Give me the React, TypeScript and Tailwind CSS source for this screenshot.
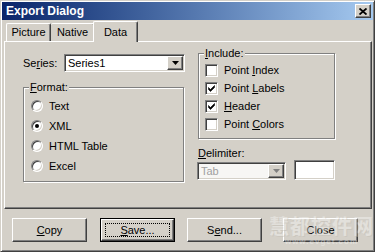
import React from 'react';

const sunken =
  'border border-t-[#808080] border-l-[#808080] border-b-white border-r-white shadow-[inset_1px_1px_0_#404040,inset_-1px_-1px_0_#d4d0c8]';
const raised =
  'border border-t-white border-l-white border-b-[#404040] border-r-[#404040] shadow-[inset_-1px_-1px_0_#808080]';

const U = ({ children }: { children: React.ReactNode }) => <span className="underline underline-offset-[1px]">{children}</span>;

const Group = ({ label, className, children }: { label: React.ReactNode; className: string; children: React.ReactNode }) => (
  <div className={`relative border border-[#808080] shadow-[inset_1px_1px_0_#fff,1px_1px_0_#fff] ${className}`}>
    <span className="absolute -top-[7px] left-[5px] bg-[#d4d0c8] px-px leading-[13px]">{label}</span>
    {children}
  </div>
);

const Arrow = ({ color }: { color: string }) => (
  <svg width="7" height="4" viewBox="0 0 7 4">
    <path d="M0 0h7L3.5 4z" fill={color} />
  </svg>
);

const Combo = ({ text, disabled, className }: { text: string; disabled?: boolean; className: string }) => (
  <div className={`${sunken} flex h-[18px] items-stretch p-[1px] ${disabled ? 'bg-[#f7f6f4]' : 'bg-white'} ${className}`}>
    <span className={`flex-1 pl-[2px] leading-[14px] ${disabled ? 'text-[#a0a0a0]' : ''}`}>{text}</span>
    <div className={`${raised} flex w-[16px] items-center justify-center bg-[#d4d0c8]`}>
      <Arrow color={disabled ? '#808080' : '#000'} />
    </div>
  </div>
);

const Radio = ({ label, checked }: { label: string; checked?: boolean }) => (
  <div className="flex h-[12px] items-center gap-[6px]">
    <div className="flex h-[12px] w-[12px] items-center justify-center rounded-full border border-t-[#808080] border-l-[#808080] border-b-white border-r-white bg-white shadow-[inset_1px_1px_0_#404040,inset_-1px_-1px_0_#d4d0c8]">
      {checked && <div className="h-[4px] w-[4px] rounded-full bg-black" />}
    </div>
    <span className="leading-[13px]">{label}</span>
  </div>
);

const Check = ({ label, checked }: { label: React.ReactNode; checked?: boolean }) => (
  <div className="flex h-[13px] items-center gap-[6px]">
    <div className={`${sunken} flex h-[13px] w-[13px] items-center justify-center bg-white`}>
      {checked && (
        <svg width="9" height="9" viewBox="0 0 9 9">
          <path d="M1.5 3.5l2 2 4-4v2l-4 4-2-2z" fill="#000" stroke="#000" strokeWidth="0.6" />
        </svg>
      )}
    </div>
    <span className="leading-[13px]">{label}</span>
  </div>
);

const Button = ({ children, className, isDefault }: { children: React.ReactNode; className: string; isDefault?: boolean }) =>
  isDefault ? (
    <div className={`h-[24px] w-[75px] border border-black ${className}`}>
      <div className={`${raised} flex h-full items-center justify-center p-[3px]`}>
        <div className="flex h-full w-full items-center justify-center border border-dotted border-black">{children}</div>
      </div>
    </div>
  ) : (
    <div className={`${raised} flex h-[24px] w-[75px] items-center justify-center ${className}`}>{children}</div>
  );

export default function App() {
  return (
    <div className="relative h-[252px] w-[375px] overflow-hidden border border-t-[#d4d0c8] border-l-[#d4d0c8] border-b-[#404040] border-r-[#404040] bg-[#d4d0c8] font-['Liberation_Sans',Arial,sans-serif] text-[11px] text-black shadow-[inset_1px_1px_0_#fff,inset_-1px_-1px_0_#808080]">
      <div className="px-[1px] pt-[1px]">
        {/* title bar */}
        <div className="flex h-[18px] items-center bg-gradient-to-r from-[#0a246a] to-[#a6caf0] pl-[4px] pr-[2px]">
          <span className="flex-1 text-[12px] font-bold leading-none text-white">Export Dialog</span>
          <div className={`${raised} flex h-[14px] w-[16px] items-center justify-center bg-[#d4d0c8]`}>
            <svg width="8" height="7" viewBox="0 0 8 7">
              <path d="M0.5 0.5l7 6M7.5 0.5l-7 6" stroke="#000" strokeWidth="1.8" />
            </svg>
          </div>
        </div>

        {/* tabs */}
        <div className="relative z-10 ml-[4px] mt-[1px] flex h-[21px] items-end">
          <div className="mb-[1px] flex h-[18px] w-[45px] items-center justify-center rounded-t-[2px] border-l border-t border-white border-r-[#404040] border-r shadow-[inset_-1px_0_0_#808080]">
            Picture
          </div>
          <div className="mb-[1px] flex h-[18px] w-[44px] items-center justify-center rounded-t-[2px] border-t border-white border-r border-r-[#404040] shadow-[inset_-1px_0_0_#808080]">
            Native
          </div>
          <div className="-ml-[2px] flex h-[21px] w-[45px] items-start justify-center rounded-t-[2px] border-l border-t border-white border-r border-r-[#404040] bg-[#d4d0c8] pt-[2px] shadow-[inset_-1px_0_0_#808080]">
            Data
          </div>
        </div>

        {/* tab panel */}
        <div className="-mt-[1px] ml-[2px] flex h-[168px] w-[368px] gap-[13px] border border-t-white border-l-white border-b-[#404040] border-r-[#404040] pl-[18px] pt-[11px] shadow-[inset_-1px_-1px_0_#808080]">
          <div className="mt-[1px] w-[162px]">
            <div className="flex h-[18px] items-center">
              <span className="w-[41px]">
                Se<U>r</U>ies:
              </span>
              <Combo text="Series1" className="w-[121px]" />
            </div>
            <Group label={<><U>F</U>ormat:</>} className="mt-[15px] h-[95px] w-[161px]">
              <div className="flex flex-col gap-[8px] pl-[7px] pt-[12px]">
                <Radio label="Text" />
                <Radio label="XML" checked />
                <Radio label="HTML Table" />
                <Radio label="Excel" />
              </div>
            </Group>
          </div>

          <div className="w-[138px]">
            <Group label={<><U>I</U>nclude:</>} className="h-[86px] w-[137px]">
              <div className="flex flex-col gap-[5px] pl-[6px] pt-[10px]">
                <Check label={<>Point <U>I</U>ndex</>} />
                <Check label={<>Point <U>L</U>abels</>} checked />
                <Check label={<><U>H</U>eader</>} checked />
                <Check label={<>Point <U>C</U>olors</>} />
              </div>
            </Group>
            <div className="mt-[8px] leading-[13px]">
              <U>D</U>elimiter:
            </div>
            <div className="-ml-[1px] flex items-start gap-[8px]">
              <Combo text="Tab" disabled className="mt-[2px] w-[89px]" />
              <div className={`${sunken} h-[20px] w-[41px] bg-white`} />
            </div>
          </div>
        </div>

        {/* buttons */}
        <div className="mt-[9px] flex">
          <Button className="ml-[10px] w-[74px]">
            <U>C</U>opy
          </Button>
          <Button className="ml-[13px]" isDefault>
            <U>S</U>ave...
          </Button>
          <Button className="ml-[12px]">
            S<U>e</U>nd...
          </Button>
          <Button className="ml-[21px]">Close</Button>
        </div>
      </div>

      {/* watermark */}
      <div className="pointer-events-none absolute left-[268px] top-[213px] flex flex-col items-center opacity-40">
        <span className="font-['Noto_Sans_CJK_SC',sans-serif] text-[20px] font-bold leading-[23px] tracking-[1px] text-[#f8f8f8] [text-shadow:1px_1px_0_#c0bcb4]">
          慧都控件网
        </span>
        <span className="text-[8px] font-bold leading-[9px] tracking-[1px] text-[#f8f8f8]">www.evget.com</span>
      </div>
    </div>
  );
}
